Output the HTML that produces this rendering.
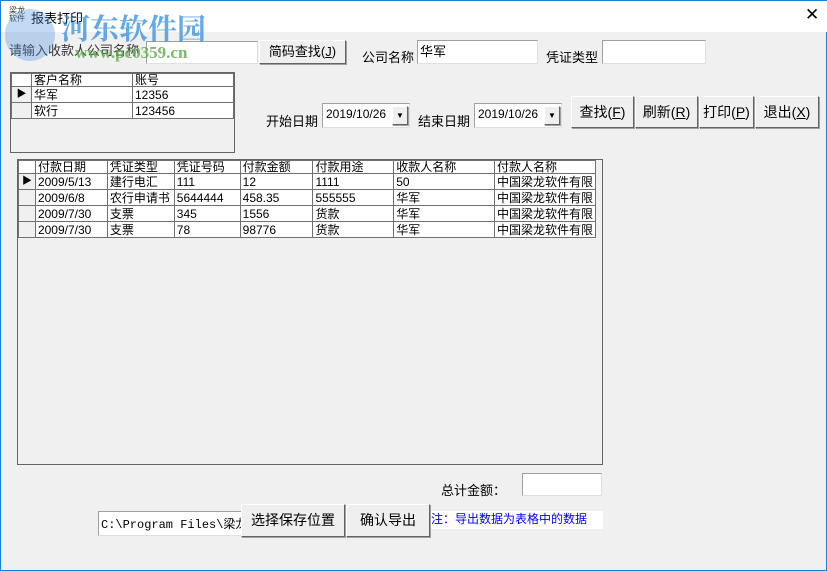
<!DOCTYPE html><html><head><meta charset="utf-8"><style>
*{box-sizing:border-box;margin:0;padding:0}
body{width:827px;height:571px;background:#f0f0f0;font-family:"Liberation Sans","Noto Sans CJK SC",sans-serif;font-size:12px;color:#000;position:relative;overflow:hidden;border:1px solid #1a7fd4}
.a{position:absolute;white-space:nowrap}
.tb{background:#fff;border:1px solid #a0a0a0;border-right-color:#e0e0e0;border-bottom-color:#e0e0e0}
.btn{background:#efefef;border:1px solid #fff;border-right-color:#646464;border-bottom-color:#646464;box-shadow:1px 1px 0 #a0a0a0;text-align:center;font-size:13px}
table{border-collapse:collapse;position:absolute;font-size:12px;background:#fff}
td{border:1px solid #707070;height:16px;padding:0 2px;overflow:hidden;white-space:nowrap;line-height:14px}
tr.h td{background:#fff;height:13px;line-height:12px}
td.i{background:#f0f0f0;padding:0;text-align:center;font-size:10px}
.w{z-index:5}
</style></head><body>
<div class="a" style="left:0;top:0;width:827px;height:31px;background:#fff"></div>
<div class="a" style="left:8px;top:6px;font-size:8px;line-height:8px;color:#333">梁龙<br>软件</div>
<div class="a" style="left:30px;top:7px;font-size:13px">报表打印</div>
<div class="a" style="left:804px;top:4px;font-size:17px">✕</div>
<div class="a" style="left:8px;top:39px;font-size:13px;color:#333">请输入收款人公司名称</div>
<div class="a tb" style="left:145px;top:40px;width:112px;height:23px"></div>
<div class="a btn" style="left:258px;top:39px;width:87px;height:24px;line-height:22px">简码查找(<u>J</u>)</div>
<div class="a" style="left:361px;top:46px;font-size:13px">公司名称</div>
<div class="a tb" style="left:416px;top:39px;width:121px;height:24px;font-size:13px;padding-left:2px">华军</div>
<div class="a" style="left:545px;top:46px;font-size:13px">凭证类型</div>
<div class="a tb" style="left:601px;top:39px;width:104px;height:24px"></div>
<div class="a w" style="left:4px;top:8px;width:50px;height:52px;border-radius:50%;background:rgba(80,150,220,.35)"></div>
<div class="a w" style="left:60px;top:6px;font-size:29px;font-weight:bold;color:rgba(50,140,220,.75);font-family:'Liberation Serif','Noto Serif CJK SC',serif">河东软件园</div>
<div class="a w" style="left:74px;top:42px;font-size:17px;font-weight:bold;color:rgba(90,170,70,.8);font-family:'Liberation Serif',serif">www.pc0359.cn</div>

<div class="a" style="left:9px;top:71px;width:225px;height:81px;border:1px solid #646464;background:#f0f0f0"></div>
<table style="left:10px;top:72px;width:223px">
<tr class="h"><td class="i" style="width:20px"></td><td style="width:101px">客户名称</td><td>账号</td></tr>
<tr><td class="i">▶</td><td>华军</td><td>12356</td></tr>
<tr><td class="i"></td><td>软行</td><td>123456</td></tr>
</table>

<div class="a" style="left:265px;top:110px;font-size:13px">开始日期</div>
<div class="a tb" style="left:321px;top:102px;width:88px;height:25px;padding:3px 3px;font-size:12px">2019/10/26</div>
<div class="a btn" style="left:391px;top:105px;width:16px;height:19px;font-size:8px;line-height:18px">▼</div>
<div class="a" style="left:417px;top:110px;font-size:13px">结束日期</div>
<div class="a tb" style="left:473px;top:102px;width:88px;height:25px;padding:3px 3px;font-size:12px">2019/10/26</div>
<div class="a btn" style="left:543px;top:105px;width:16px;height:19px;font-size:8px;line-height:18px">▼</div>
<div class="a btn" style="left:570px;top:95px;width:63px;height:32px;line-height:30px;font-size:14px">查找(<u>F</u>)</div>
<div class="a btn" style="left:634px;top:95px;width:63px;height:32px;line-height:30px;font-size:14px">刷新(<u>R</u>)</div>
<div class="a btn" style="left:698px;top:95px;width:55px;height:32px;line-height:30px;font-size:14px">打印(<u>P</u>)</div>
<div class="a btn" style="left:754px;top:95px;width:64px;height:32px;line-height:30px;font-size:14px">退出(<u>X</u>)</div>

<div class="a" style="left:16px;top:158px;width:586px;height:306px;border:1px solid #646464;background:#f0f0f0"></div>
<table style="left:17px;top:159px;width:578px">
<tr class="h"><td class="i" style="width:17px"></td><td style="width:72px">付款日期</td><td style="width:67px">凭证类型</td><td style="width:66px">凭证号码</td><td style="width:73px">付款金额</td><td style="width:81px">付款用途</td><td style="width:101px">收款人名称</td><td>付款人名称</td></tr>
<tr><td class="i">▶</td><td>2009/5/13</td><td>建行电汇</td><td>111</td><td>12</td><td>1111</td><td>50</td><td>中国梁龙软件有限</td></tr>
<tr><td class="i"></td><td>2009/6/8</td><td>农行申请书</td><td>5644444</td><td>458.35</td><td>555555</td><td>华军</td><td>中国梁龙软件有限</td></tr>
<tr><td class="i"></td><td>2009/7/30</td><td>支票</td><td>345</td><td>1556</td><td>货款</td><td>华军</td><td>中国梁龙软件有限</td></tr>
<tr><td class="i"></td><td>2009/7/30</td><td>支票</td><td>78</td><td>98776</td><td>货款</td><td>华军</td><td>中国梁龙软件有限</td></tr>
</table>

<div class="a" style="left:440px;top:479px;font-size:13px">总计金额：</div>
<div class="a tb" style="left:521px;top:472px;width:80px;height:23px"></div>
<div class="a tb" style="left:97px;top:510px;width:146px;height:25px;font-family:'Liberation Mono','Noto Sans CJK SC',monospace;font-size:12px;padding:3px 2px;overflow:hidden">C:\Program Files\梁龙</div>
<div class="a btn" style="left:240px;top:503px;width:104px;height:33px;line-height:31px;font-size:14px">选择保存位置</div>
<div class="a btn" style="left:345px;top:503px;width:84px;height:33px;line-height:31px;font-size:14px">确认导出</div>
<div class="a" style="left:430px;top:510px;width:172px;height:18px;background:#fff;color:#0000ff;font-size:12px;line-height:17px">注：导出数据为表格中的数据</div>
</body></html>
